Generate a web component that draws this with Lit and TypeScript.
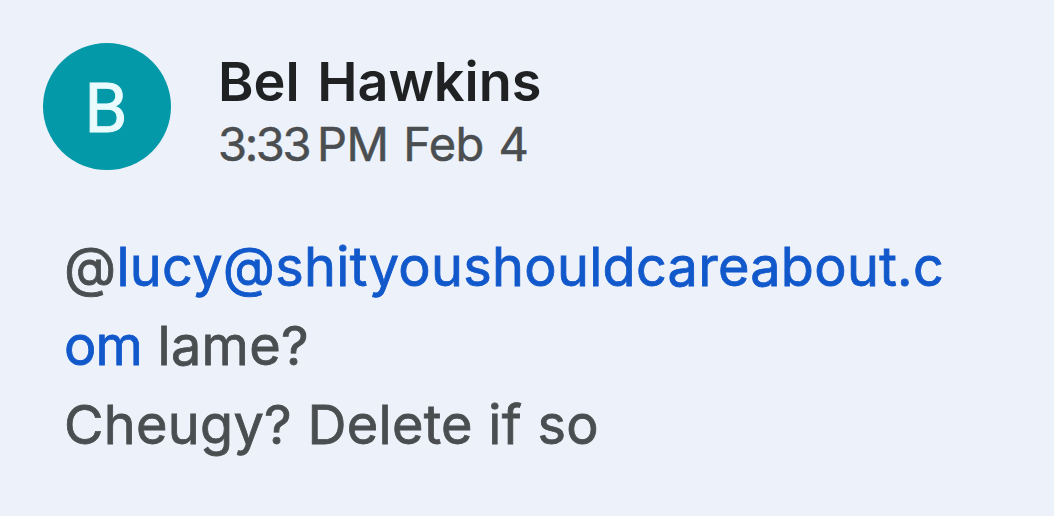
import { LitElement, html, css } from 'lit';
import { customElement, property } from 'lit/decorators.js';

@customElement('user-avatar')
export class UserAvatar extends LitElement {
  @property() initial = '';

  static styles = css`
    :host {
      display: flex;
      align-items: center;
      justify-content: center;
      box-sizing: border-box;
      width: 128px;
      height: 127px;
      padding: 3px 2px 0 0;
      border-radius: 50%;
      background: #0399a8;
      color: #e9fbfc;
      font-family: Roboto, sans-serif;
      font-size: 69px;
      line-height: 1;
      -webkit-text-stroke: 1px;
    }
  `;

  render() {
    return html`<span>${this.initial}</span>`;
  }
}

@customElement('app-root')
export class AppRoot extends LitElement {
  static styles = css`
    :host {
      display: block;
      box-sizing: border-box;
      height: 516px;
      padding: 43px 43px 0;
      overflow: hidden;
      background: #ecf1fa;
      color: #4b4e50;
      font-family: Inter, 'Liberation Sans', sans-serif;
    }
    .header {
      display: flex;
      gap: 47px;
    }
    .meta {
      padding-top: 8px;
      white-space: nowrap;
    }
    .name {
      color: #1f2123;
      font-size: 54px;
      font-weight: 600;
      line-height: 62px;
      word-spacing: 4px;
    }
    .time {
      font-size: 47px;
      line-height: 61px;
      letter-spacing: -0.5px;
      word-spacing: 2px;
      -webkit-text-stroke: 0.5px;
    }
    .clock {
      letter-spacing: -2.4px;
    }
    .body {
      padding: 53px 0 0 21px;
      font-size: 54px;
      line-height: 79px;
      letter-spacing: 0.3px;
      white-space: nowrap;
      -webkit-text-stroke: 0.8px;
    }
    .mention {
      color: #1158cb;
    }
    .tight {
      letter-spacing: -0.8px;
    }
  `;

  render() {
    return html`
      <div class="header">
        <user-avatar initial="B"></user-avatar>
        <div class="meta">
          <div class="name">Bel Hawkins</div>
          <div class="time"><span class="clock">3:33</span>&#8239;PM Feb 4</div>
        </div>
      </div>
      <div class="body">
        <div>@<span class="mention">lucy@shityoushouldcareabout.c</span></div>
        <div><span class="mention tight">om</span> lame?</div>
        <div>Cheugy? Delete if so</div>
      </div>
    `;
  }
}
